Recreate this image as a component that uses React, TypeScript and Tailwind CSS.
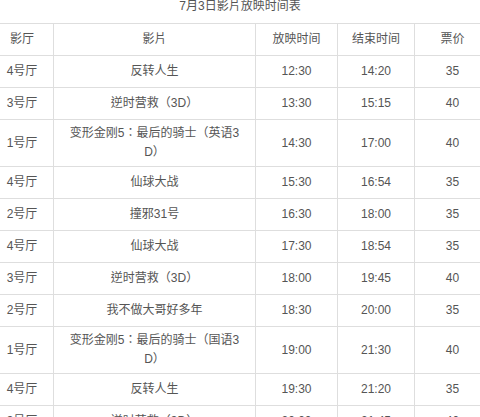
import React from "react";

type Row = { hall: string; film: string; start: string; end: string; price: string };

const rows: Row[] = [
  { hall: "4号厅", film: "反转人生", start: "12:30", end: "14:20", price: "35" },
  { hall: "3号厅", film: "逆时营救（3D）", start: "13:30", end: "15:15", price: "40" },
  { hall: "1号厅", film: "变形金刚5：最后的骑士（英语3D）", start: "14:30", end: "17:00", price: "40" },
  { hall: "4号厅", film: "仙球大战", start: "15:30", end: "16:54", price: "35" },
  { hall: "2号厅", film: "撞邪31号", start: "16:30", end: "18:00", price: "35" },
  { hall: "4号厅", film: "仙球大战", start: "17:30", end: "18:54", price: "35" },
  { hall: "3号厅", film: "逆时营救（3D）", start: "18:00", end: "19:45", price: "40" },
  { hall: "2号厅", film: "我不做大哥好多年", start: "18:30", end: "20:00", price: "35" },
  { hall: "1号厅", film: "变形金刚5：最后的骑士（国语3D）", start: "19:00", end: "21:30", price: "40" },
  { hall: "4号厅", film: "反转人生", start: "19:30", end: "21:20", price: "35" },
  { hall: "3号厅", film: "逆时营救（3D）", start: "20:00", end: "21:45", price: "40" },
];

const cell = "border border-[#dedede] h-[32px] py-1 px-[14px] text-center align-middle leading-[19px] break-all";

export default function App() {
  return (
    <div
      className="w-[480px] h-[417px] overflow-hidden bg-white text-[12px] text-[#555]"
      style={{ fontFamily: '"Liberation Sans", "Noto Sans CJK TC", "Noto Sans CJK SC", sans-serif' }}
    >
      <div className="h-[23px] text-center leading-[13px] text-[#555]">7月3日影片放映时间表</div>
      <table className="ml-[-10px] w-[500px] table-fixed border-collapse">
        <colgroup>
          <col className="w-[63px]" />
          <col className="w-[202px]" />
          <col className="w-[82px]" />
          <col className="w-[77px]" />
          <col className="w-[76px]" />
        </colgroup>
        <thead>
          <tr>
            <td className={cell}>影厅</td>
            <td className={cell}>影片</td>
            <td className={cell}>放映时间</td>
            <td className={cell}>结束时间</td>
            <td className={cell}>票价</td>
          </tr>
        </thead>
        <tbody>
          {rows.map((r, i) => (
            <tr key={i}>
              <td className={cell}>{r.hall}</td>
              <td className={cell}>{r.film}</td>
              <td className={cell}>{r.start}</td>
              <td className={cell}>{r.end}</td>
              <td className={cell}>{r.price}</td>
            </tr>
          ))}
        </tbody>
      </table>
    </div>
  );
}
